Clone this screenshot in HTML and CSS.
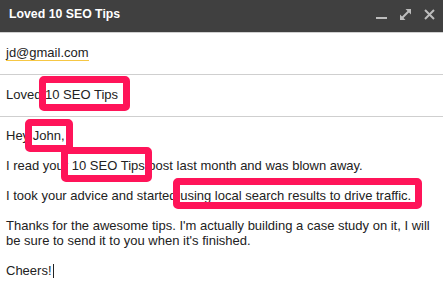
FILE: index.html
```html
<!DOCTYPE html>
<html lang="en">
<head>
  <meta charset="UTF-8" />
  <title>Loved 10 SEO Tips</title>
  <meta name="viewport" content="width=device-width, initial-scale=1" />
  <link rel="stylesheet" href="styles.css">
</head>
<body>
  <div class="compose">
    <div class="titlebar">
      <span class="title">Loved 10 SEO Tips</span>
      <div class="controls">
        <svg class="icon" viewBox="0 0 11 11" width="11" height="11" aria-label="Minimize">
          <rect x="0" y="8" width="11" height="2" />
        </svg>
        <svg class="icon" viewBox="0 0 11 11" width="11" height="11" aria-label="Full screen">
          <polygon points="5.5,0 11,0 11,5.5" />
          <polygon points="0,5.5 0,11 5.5,11" />
          <line x1="2" y1="9" x2="9" y2="2" />
        </svg>
        <svg class="icon" viewBox="0 0 11 11" width="11" height="11" aria-label="Close">
          <path d="M1 1 L10 10 M10 1 L1 10" />
        </svg>
      </div>
    </div>

    <div class="field">
      <span class="recipient">jd@gmail.com</span>
    </div>

    <div class="field">
      Loved <span class="hl hl-subject">10 SEO Tips</span>
    </div>

    <div class="message">
      <p>Hey <span class="hl hl-name">John,</span></p>
      <p>I read your <span class="hl hl-post">10 SEO Tips</span> post last month and was blown away.</p>
      <p>I took your advice and started <span class="hl hl-result">using local search results to drive traffic.</span></p>
      <p>Thanks for the awesome tips. I'm actually building a case study on it, I will be sure to send it to you when it's finished.</p>
      <p>Cheers!<span class="caret"></span></p>
    </div>
  </div>
</body>
</html>
```

FILE: styles.css
```css
body { margin: 0; background: #fff; font-family: Arial, "Liberation Sans", sans-serif; font-size: 13px; color: #222; }

.compose { width: 443px; }

.titlebar {
  height: 33px; box-sizing: border-box; padding: 0 8px 4px 9px;
  background: #404040; border-bottom: 1px solid #d0d0d0;
  display: flex; align-items: center; justify-content: space-between;
}
.title { color: #fff; font-weight: bold; font-size: 12.3px; }
.controls { display: flex; gap: 13px; align-items: center; }
.icon { display: block; fill: #bdbdbd; stroke: #bdbdbd; }
.icon rect, .icon polygon { stroke: none; }
.icon line, .icon path { stroke-width: 2; }

.field {
  padding: 12px 6px 14px; line-height: 15px;
  border-bottom: 1px solid #cfcfcf;
}
.recipient { border-bottom: 1px solid #f6c744; }

.message { padding: 11px 6px 0; line-height: 15px; }
.message p { margin: 0 0 15px; }

.hl { position: relative; }
.hl::after {
  content: ""; position: absolute;
  border: 7px solid #ff1459; border-radius: 5px;
}
.hl-subject::after { inset: -11px -12px -9px -6px; }
.hl-name::after { inset: -9px -8px -9px -8px; }
.hl-post::after { inset: -11px -7px -9px -11px; }
.hl-result::after { inset: -10px -11px -6px -7px; }

.caret {
  display: inline-block; width: 1px; height: 14px;
  margin-left: 1px; vertical-align: -3px; background: #222;
}
```
